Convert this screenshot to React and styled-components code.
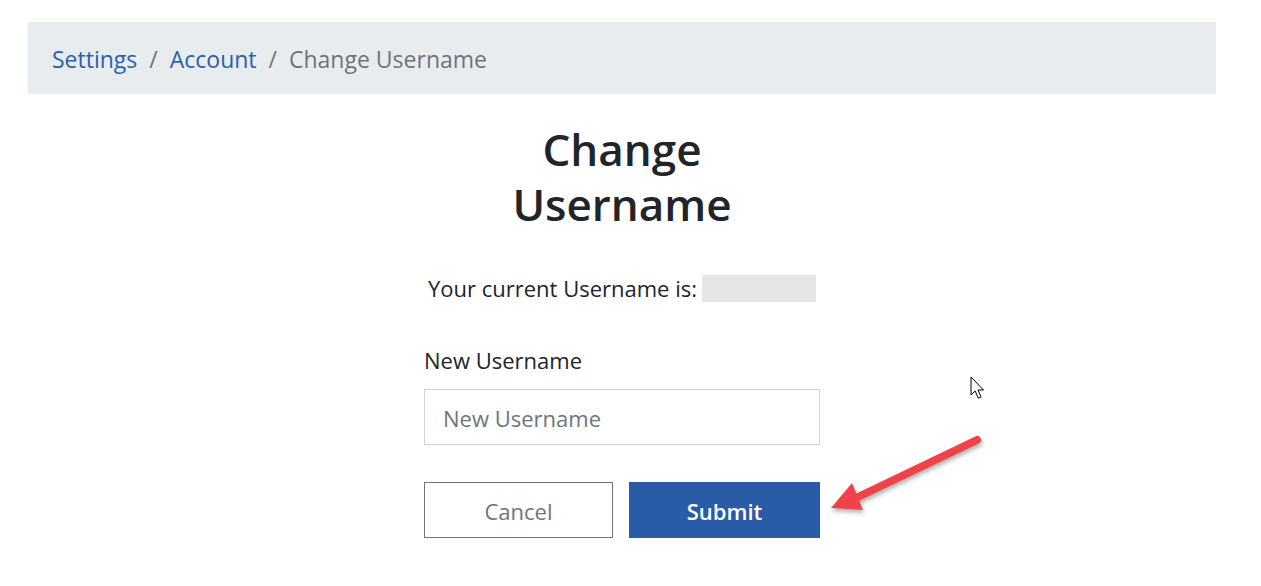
import React from "react";
import styled, { createGlobalStyle } from "styled-components";

const Global = createGlobalStyle`
  html, body { margin: 0; padding: 0; background: #ffffff; }
  body { font-family: "Open Sans", "Noto Sans", sans-serif; color: #212529; }
  * { box-sizing: border-box; }
`;

const Page = styled.div`
  position: relative;
  width: 1261px;
  height: 586px;
  padding: 22px 0 0 28px;
  overflow: hidden;
`;

const Container = styled.div`
  width: 1188px;
  display: flex;
  flex-direction: column;
  align-items: center;
`;

const Breadcrumb = styled.nav`
  align-self: stretch;
  height: 72px;
  background: #e9ecef;
  display: flex;
  align-items: center;
  padding: 2px 24px 0;
  font-size: 23px;
`;

const Crumb = styled.a`
  color: ${(p) => (p.$active ? "#6c757d" : "#2a61ab")};
  text-decoration: none;
`;

const Sep = styled.span`
  color: #6c757d;
  padding: 0 12px;
`;

const Heading = styled.h2`
  margin: 28px 0 0;
  width: 300px;
  text-align: center;
  font-size: 44px;
  line-height: 55px;
  font-weight: 600;
  color: #212529;
`;

const CurrentRow = styled.div`
  margin-top: 40px;
  display: flex;
  align-items: center;
  gap: 5px;
  font-size: 22px;
  line-height: 33px;
  color: #212529;
`;

const Redacted = styled.span`
  display: inline-block;
  width: 114px;
  height: 27px;
  background: #e6e6e6;
`;

const Form = styled.form`
  margin-top: 39px;
  width: 396px;
  display: flex;
  flex-direction: column;
`;

const Label = styled.label`
  font-size: 22px;
  line-height: 33px;
  color: #212529;
`;

const Input = styled.input`
  margin-top: 12px;
  height: 56px;
  width: 100%;
  border: 1px solid #d3d3d3;
  padding: 2px 18px 0;
  font-family: "Open Sans", "Noto Sans", sans-serif;
  font-size: 22px;
  color: #212529;
  outline: none;
  &::placeholder { color: #6c757d; }
`;

const Buttons = styled.div`
  margin-top: 37px;
  display: grid;
  grid-template-columns: 189px 191px;
  gap: 16px;
`;

const Button = styled.button`
  height: 56px;
  padding-top: 2px;
  font-family: "Open Sans", "Noto Sans", sans-serif;
  font-size: 22px;
  border: 1px solid ${(p) => (p.$primary ? "#2a5ba6" : "#737373")};
  background: ${(p) => (p.$primary ? "#2a5ba6" : "#ffffff")};
  color: ${(p) => (p.$primary ? "#ffffff" : "#6c757d")};
  font-weight: ${(p) => (p.$primary ? 600 : 400)};
  cursor: pointer;
`;

const ArrowOverlay = styled.svg`
  position: absolute;
  left: 820px;
  top: 420px;
  overflow: visible;
`;

const CursorOverlay = styled.svg`
  position: absolute;
  left: 970px;
  top: 376px;
`;

export default function App() {
  return (
    <>
      <Global />
      <Page>
        <Container>
          <Breadcrumb>
            <Crumb href="#">Settings</Crumb>
            <Sep>/</Sep>
            <Crumb href="#">Account</Crumb>
            <Sep>/</Sep>
            <Crumb $active>Change Username</Crumb>
          </Breadcrumb>
          <Heading>Change Username</Heading>
          <CurrentRow>
            Your current Username is:
            <Redacted />
          </CurrentRow>
          <Form onSubmit={(e) => e.preventDefault()}>
            <Label htmlFor="nu">New Username</Label>
            <Input id="nu" placeholder="New Username" />
            <Buttons>
              <Button type="button">Cancel</Button>
              <Button type="submit" $primary>Submit</Button>
            </Buttons>
          </Form>
        </Container>
        <ArrowOverlay width="180" height="110" viewBox="0 0 180 110">
          <defs>
            <filter id="sh" x="-20%" y="-20%" width="140%" height="160%">
              <feDropShadow dx="1" dy="3" stdDeviation="2" floodColor="#000" floodOpacity="0.3" />
            </filter>
          </defs>
          <g filter="url(#sh)">
            <line x1="157" y1="20" x2="36" y2="78" stroke="#f04348" strokeWidth="8" strokeLinecap="round" />
            <polygon points="11,88 32,63 43,90" fill="#f04348" />
          </g>
        </ArrowOverlay>
        <CursorOverlay width="16" height="28" viewBox="0 0 16 28">
          <path d="M1 1 L1 19 L5.2 15 L8.2 22.2 L11 21 L8 14 L13.5 14 Z" fill="#ffffff" stroke="#000" strokeWidth="1" strokeLinejoin="miter" />
        </CursorOverlay>
      </Page>
    </>
  );
}
